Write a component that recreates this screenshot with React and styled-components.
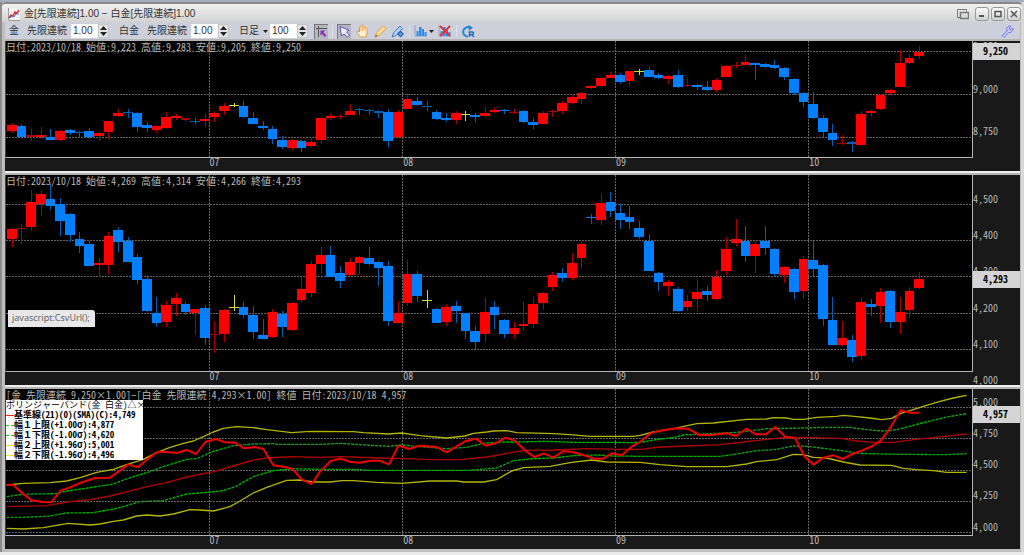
import React, { useState } from "react";
import styled, { createGlobalStyle } from "styled-components";

const GOTHIC = `"Noto Sans Mono CJK JP", "Noto Sans CJK JP", monospace`;
const UI = `"Liberation Sans", "Noto Sans CJK JP", sans-serif`;

const COLORS = { R: "#ff0000", B: "#0080ff", Y: "#d8d840" };
const WICKS = { R: "#a80000", B: "#0060b8", Y: "#d8d840" };

// x of the first candle and the step between candles, three units a pixel
const FIRST_X = 36;
const STEP = 28.96;
const MONTHS = [
  { label: "07", x: 628 },
  { label: "08", x: 1208 },
  { label: "09", x: 1845 },
  { label: "10", x: 2424 }
];

// colour, high, body top, body bottom, low
const GOLD = `
R 190 196 213 220|B 193 199 231 236|R 206 226 230 243|R 202 225 231 234|B 208 230 241 241
R 210 213 241 242|B 206 210 219 226|B 212 215 219 234|B 204 213 230 237|R 215 218 227 243
R 182 183 217 238|R 147 158 169 172|B 148 157 160 174|B 156 158 200 217|B 187 195 205 215
R 195 198 210 219|R 156 172 205 207|R 163 168 174 180|R 174 175 179 183|B 173 183 186 191
R 163 178 184 200|R 152 160 172 186|R 130 137 154 164|Y 129 134 137 141|B 122 138 172 174
B 156 175 192 192|B 182 197 205 211|B 197 206 237 251|B 229 239 261 268|R 236 239 263 270
B 240 242 265 275|R 234 247 259 262|R 172 175 241 248|R 163 168 175 179|R 162 167 170 178
R 132 153 165 166|B 144 147 150 165|B 147 150 153 165|B 150 154 158 174|B 148 156 243 261
R 150 156 232 234|R 99 117 147 148|B 112 122 134 138|B 123 137 140 153|B 149 156 177 180
B 160 174 179 187|R 152 160 179 191|Y 154 161 164 182|B 160 164 171 185|R 141 158 167 171
R 141 150 156 160|B 146 149 154 163|R 146 155 158 161|B 150 152 186 188|B 175 187 194 206
R 153 158 192 193|R 150 154 157 171|R 124 129 153 162|R 105 112 129 131|R 96 98 117 132
R 74 77 84 88|R 52 55 79 80|R 36 46 53 53|B 39 45 67 71|R 32 34 64 76
Y 26 33 36 45|B 21 31 50 52|B 39 46 55 57|R 45 48 58 71|B 31 46 80 83
R 55 74 78 81|B 73 76 81 90|B 64 81 90 92|R 55 60 90 97|R 15 19 50 51
R 6 14 17 24|R -17 6 16 18|B 9 10 15 60|B 8 11 21 23|B 0 14 24 26
B 20 24 52 59|B 55 58 98 105|B 96 98 126 140|B 96 132 174 178|B 166 173 215 231
B 192 220 241 258|R 225 248 251 254|B 243 247 251 275|R 153 163 254 258|R 151 153 160 170
R 103 105 148 149|R 87 89 99 105|R -31 8 80 81|R -17 -7 9 12|R -43 -25 -12 -4`;

const PLATINUM = `
R 168 170 202 224|R 157 168 171 216|R 53 90 166 176|R 57 66 95 131|B 36 81 101 114
B 78 96 148 191|B 122 125 190 209|B 180 201 221 243|B 207 217 281 282|R 257 274 279 315
R 181 193 279 307|B 165 174 209 240|B 194 207 269 270|B 246 255 324 337|B 314 322 417 420
B 376 423 453 464|R 386 400 449 464|R 363 377 396 432|B 391 395 420 430|R 410 412 423 488
B 399 408 497 519|R 447 487 490 543|R 412 414 487 509|Y 368 406 409 416|B 390 404 430 438
B 401 430 479 502|B 440 490 500 501|R 411 419 495 497|B 418 425 464 495|R 390 393 475 478
R 316 351 383 389|R 266 277 362 375|R 225 249 276 306|B 222 249 314 315|B 281 303 327 347
R 258 270 310 313|R 252 256 274 310|B 225 258 277 279|B 266 270 289 342|B 267 282 446 461
R 387 423 452 453|R 263 306 394 401|B 297 306 372 389|Y 353 384 387 408|B 408 411 452 453
R 397 406 449 463|B 387 402 418 454|B 423 424 476 501|B 462 478 509 530|R 378 421 487 509
B 387 406 428 470|B 440 445 487 499|R 449 468 486 501|R 388 455 461 478|R 376 397 456 468
R 361 363 392 415|R 301 309 346 357|B 289 304 317 329|R 243 273 317 323|R 207 217 257 291
B 126 134 139 155|R 66 94 144 159|B 59 90 116 136|B 97 124 145 171|B 102 134 150 171
B 147 167 196 200|B 186 206 296 297|B 300 303 331 358|R 325 330 341 373|B 345 352 417 420
R 370 388 406 417|R 321 359 380 416|B 342 356 370 387|R 293 316 380 383|R 195 232 297 308
R 141 202 214 221|B 161 206 252 270|R 207 217 252 302|B 162 206 228 250|B 229 230 305 315
R 283 285 308 332|B 289 290 360 382|R 251 261 358 380|B 206 263 290 311|B 275 280 441 461
B 376 445 518 519|R 447 498 518 521|B 488 503 554 570|R 378 390 552 565|B 380 395 406 432
R 349 361 401 452|B 355 356 451 468|R 376 419 451 485|R 346 356 415 439|R 299 322 348 350`;

const parse = text =>
  text
    .trim()
    .split(/[\n|]/)
    .map(row => {
      const [kind, ...n] = row.split(" ");
      const [high, top, bottom, low] = n.map(Number);
      return { kind, high, top, bottom, low };
    });

const BANDS = [
  {
    color: "#b00000",
    points:
      "20,380 140,377 200,366 270,359 330,348 440,320 500,308 560,291 640,275 700,258 760,240 800,234 870,230 960,232 1020,230 1130,234 1220,236 1300,239 1380,239 1460,231 1520,220 1570,211 1660,210 1760,206 1860,208 1920,208 1980,201 2060,198 2160,194 2230,186 2300,178 2350,173 2420,172 2520,175 2570,183 2620,187 2680,187 2740,179 2800,173 2860,166 2900,162"
  },
  {
    color: "#00b000",
    dashed: true,
    points:
      "20,350 60,344 100,342 170,341 200,333 250,326 340,312 370,300 410,287 440,278 490,260 560,238 590,236 640,214 700,197 760,192 820,191 830,193 960,193 1020,190 1080,194 1165,199 1205,195 1260,200 1340,206 1400,202 1450,190 1510,186 1550,186 1640,184 1720,187 1810,187 1890,188 1920,187 1980,177 2020,173 2050,165 2110,162 2210,157 2280,149 2300,146 2370,145 2480,142 2550,142 2570,145 2620,151 2650,153 2690,149 2720,141 2770,128 2840,111 2900,101"
  },
  {
    color: "#00b000",
    dashed: true,
    points:
      "20,412 70,412 150,408 200,399 280,398 350,385 420,365 490,362 560,342 620,337 670,332 710,318 760,290 820,272 880,266 960,268 1050,268 1120,271 1410,271 1490,264 1540,242 1600,236 1660,234 1720,227 1790,225 1840,228 1920,229 2160,229 2220,220 2270,212 2330,208 2380,198 2420,199 2480,206 2540,214 2570,219 2600,221 2700,223 2840,224 2900,221"
  },
  {
    color: "#b4b400",
    points:
      "20,315 70,310 150,308 200,303 240,293 290,277 340,268 380,254 430,238 470,218 510,202 550,190 580,183 610,170 640,156 670,145 710,140 760,143 800,149 875,158 930,154 1060,155 1090,158 1165,162 1205,159 1260,167 1340,174 1395,168 1420,160 1460,156 1480,153 1520,152 1550,158 1660,161 1710,164 1770,169 1900,169 1920,166 1960,156 2020,146 2090,131 2140,129 2240,118 2300,117 2320,113 2360,114 2380,118 2410,118 2450,112 2510,109 2530,106 2570,110 2610,114 2645,119 2675,115 2700,101 2730,92 2770,79 2820,64 2860,54 2900,46"
  },
  {
    color: "#b4b400",
    points:
      "20,445 70,447 130,443 205,430 270,435 300,432 340,424 370,420 410,408 440,405 480,408 520,402 570,389 600,390 640,393 690,380 720,363 760,339 800,322 860,301 900,300 940,306 990,306 1025,302 1060,302 1130,307 1205,310 1290,303 1370,303 1390,306 1450,306 1490,299 1535,273 1570,263 1650,259 1710,248 1775,240 1820,246 1920,247 1980,254 2060,260 2180,260 2240,252 2270,245 2330,239 2380,223 2410,224 2440,232 2480,234 2530,246 2580,255 2675,256 2710,265 2750,269 2800,272 2840,277 2900,277"
  },
  {
    color: "#ee0000",
    thick: true,
    points:
      "20,314 40,315 65,338 95,361 127,366 153,367 182,332 210,322 240,309 285,294 330,293 385,253 413,262 450,232 470,217 490,215 530,219 560,210 588,222 616,186 648,177 675,187 705,188 732,205 765,201 790,207 820,256 850,260 878,267 905,298 935,312 960,275 992,243 1022,236 1052,246 1080,248 1110,242 1138,242 1167,253 1195,197 1228,207 1258,197 1310,201 1340,217 1395,184 1428,176 1457,197 1487,190 1516,173 1545,182 1575,211 1603,231 1631,220 1660,233 1690,213 1720,217 1760,228 1780,236 1810,236 1835,220 1865,226 1895,200 1920,186 1950,161 1980,152 2030,145 2063,146 2098,165 2128,165 2180,160 2208,168 2240,146 2267,163 2297,163 2326,141 2355,170 2385,174 2414,230 2441,254 2470,233 2500,226 2528,237 2557,222 2585,212 2615,199 2643,181 2670,145 2702,91 2730,98 2758,98"
  }
];

const LEGEND = [
  { name: "基準線(21)(0)(SMA)(C):4,749", color: "#ff2020" },
  { name: "幅１上限(+1.00σ):4,877", color: "#20c020", dashed: true },
  { name: "幅１下限(-1.00σ):4,620", color: "#20c020", dashed: true },
  { name: "幅２上限(+1.96σ):5,001", color: "#e8e820" },
  { name: "幅２下限(-1.96σ):4,496", color: "#e8e820" }
];

const Candles = ({ rows }) =>
  rows.map((c, i) => {
    const x = FIRST_X + i * STEP;
    return (
      <g key={i} shapeRendering="crispEdges">
        <rect x={x - 1} y={c.high} width="3" height={c.low - c.high} fill={WICKS[c.kind]} />
        <rect
          x={x - 15}
          y={c.top}
          width="29"
          height={c.bottom - c.top}
          fill={c.bottom - c.top < 5 ? WICKS[c.kind] : COLORS[c.kind]}
        />
      </g>
    );
  });

const Bands = () =>
  BANDS.map((b, i) => (
    <polyline
      key={i}
      points={b.points}
      fill="none"
      stroke={b.color}
      strokeWidth={b.thick ? 6 : 4}
      strokeDasharray={b.dashed ? "9 3" : undefined}
      strokeLinejoin="round"
    />
  ));

// top and height are the visible range, full adds the strip under the plot
const ChartPanel = ({ grow, top, height, full, lines, header, badge, children, extra }) => (
  <Panel $grow={grow}>
    <Plot>
      <Drawing viewBox={`18 ${top} 2898 ${height}`} preserveAspectRatio="none" aria-hidden="true">
        <g stroke="#666666" strokeWidth="3" strokeDasharray="6 3" shapeRendering="crispEdges">
          {lines.map(l => (
            <line key={l.y} x1="18" x2="2916" y1={l.y} y2={l.y} />
          ))}
          {MONTHS.map(m => (
            <line key={m.x} x1={m.x} x2={m.x} y1={top} y2={top + height} />
          ))}
        </g>
        {children}
      </Drawing>
      <Header>{header}</Header>
      {extra}
    </Plot>
    <Months>
      {MONTHS.map(m => (
        <Month key={m.x} style={{ left: `${((m.x - 16) / 2898) * 100}%` }}>
          {m.label}
        </Month>
      ))}
    </Months>
    <Scale>
      {lines.map(l => (
        <Price key={l.y} style={{ top: `${((l.y - 17 - top) / full) * 100}%` }}>
          {l.label}
        </Price>
      ))}
      <Badge style={{ top: `${((badge.y - top) / full) * 100}%` }}>{badge.text}</Badge>
    </Scale>
  </Panel>
);

const Spinner = ({ label, initial, step, digits }) => {
  const [value, setValue] = useState(initial);
  const move = d => setValue((Number(value) + d * step).toFixed(digits));
  return (
    <SpinBox>
      <SpinInput aria-label={label} value={value} onChange={e => setValue(e.target.value)} />
      <Arrows>
        <Arrow type="button" aria-label={label + " +"} onClick={() => move(1)}>
          <svg width="7" height="4" viewBox="0 0 7 4">
            <path d="M0 4 3.500 0 7 4z" fill="#222" />
          </svg>
        </Arrow>
        <Arrow type="button" aria-label={label + " -"} onClick={() => move(-1)}>
          <svg width="7" height="4" viewBox="0 0 7 4">
            <path d="M0 0 3.500 4 7 0z" fill="#222" />
          </svg>
        </Arrow>
      </Arrows>
    </SpinBox>
  );
};

const Caret = () => (
  <svg width="5" height="3" viewBox="0 0 5 3" aria-hidden="true">
    <path d="M0 0h5L2.500 3z" fill="#222" />
  </svg>
);

const BarsIcon = ({ crossed }) => (
  <svg width="14" height="14" viewBox="0 0 14 14">
    <path d="M1 1v11h12" fill="none" stroke="#8aa4c4" />
    <path d="M2.500 7h2v5h-2zM5 3h2.500v9H5zM8 5h2v7H8zM10.500 8h2v4h-2z" fill="#2f8be6" />
    {crossed && <path d="M2 2l10 10M12 2 2 12" stroke="#e0343c" strokeWidth="2" />}
  </svg>
);

function App() {
  return (
    <Window>
      <GlobalStyle />
      <TitleBar>
        <svg width="12" height="13" viewBox="0 0 12 13" aria-hidden="true">
          <path d="M0 0h12v13H0z" fill="#f4f4f4" />
          <path d="M.5 0v12.500H12" fill="none" stroke="#999" />
          <path d="M1 10l2-3 2 1 2-4 2 1 2-3" fill="none" stroke="#e03030" strokeWidth="1.500" />
          <path d="M2 10l2-2 2 1 2-3 3 0" fill="none" stroke="#4a7ae0" />
        </svg>
        <Title>金[先限連続]1.00 − 白金[先限連続]1.00</Title>
        <Detach type="button" aria-label="detach">
          <svg width="12" height="11" viewBox="0 0 12 11" fill="none" stroke="#777">
            <path d="M3.500 8.500h-3v-8h9v2" />
            <path d="M3.500 3.500h8v6h-8z" strokeWidth="1.500" />
          </svg>
        </Detach>
        <WindowButtons>
          <WindowButton type="button" aria-label="minimize">
            <svg width="8" height="8" viewBox="0 0 8 8">
              <path d="M1 6h5" stroke="#555" strokeWidth="2" />
            </svg>
          </WindowButton>
          <WindowButton type="button" aria-label="maximize">
            <svg width="8" height="8" viewBox="0 0 8 8">
              <path d="M1 1.500h6v5H1z" fill="none" stroke="#555" strokeWidth="1.500" />
            </svg>
          </WindowButton>
          <WindowButton type="button" aria-label="close">
            <svg width="8" height="8" viewBox="0 0 8 8">
              <path d="M1 1l6 6M7 1 1 7" stroke="#555" strokeWidth="1.500" />
            </svg>
          </WindowButton>
        </WindowButtons>
      </TitleBar>

      <Toolbar>
        <Group $width={110}>
          <Name>金</Name>
          <Name>先限連続</Name>
          <Spinner label="金" initial="1.00" step={0.01} digits={2} />
        </Group>
        <Group $width={120}>
          <Name>白金</Name>
          <Name>先限連続</Name>
          <Spinner label="白金" initial="1.00" step={0.01} digits={2} />
        </Group>
        <Period>
          <PeriodSelect aria-label="足種" defaultValue="日足">
            <option>日足</option>
            <option>週足</option>
            <option>月足</option>
          </PeriodSelect>
          <Caret />
        </Period>
        <Spinner label="本数" initial="100" step={1} digits={0} />
        <Tools>
          <Tool type="button" $pressed aria-label="crosshair">
            <svg width="13" height="13" viewBox="0 0 13 13">
              <path d="M3.500 1v11M1 3.500h11" stroke="#555" />
              <path d="M5.500 5.500v5l1.500-1.500 3 3 1.500-1.500-3-3 1.500-2z" fill="#8a2fb8" />
            </svg>
          </Tool>
          <Divider />
          <Tool type="button" $pressed aria-label="select">
            <svg width="13" height="13" viewBox="0 0 13 13">
              <path d="M2 1.500 3.500 11l2.500-2 3.500 3L11.500 10 8.500 7l2.500-2z" fill="#f0f0ff" stroke="#5a50b8" />
            </svg>
          </Tool>
          <Tool type="button" aria-label="pan">
            <svg width="13" height="14" viewBox="0 0 13 14">
              <path
                d="M4 13 1 8.500Q.5 7 2 7l1.500 1V3q1-1.500 1.500 0V1.500q1-1.500 1.600 0V2q1-1 1.500.5V3.500q1-1 1.600.5v1q1.500-1 1.500.5L11 10l-1.500 3z"
                fill="#fff0d8"
                stroke="#e8963a"
              />
              <path d="M5 3v4M6.600 2v5M8.200 3v4" stroke="#e8963a" strokeWidth=".7" />
            </svg>
          </Tool>
          <Tool type="button" aria-label="draw">
            <svg width="13" height="13" viewBox="0 0 13 13">
              <path d="M1 12l1.500-4L9.500 1l2.500 2.500L5 10.500z" fill="#ffe0a0" stroke="#e8963a" />
              <path d="M1 12l1-2.500 1.500 1.500z" fill="#8a5a20" />
            </svg>
          </Tool>
          <Tool type="button" aria-label="edit lines">
            <svg width="14" height="13" viewBox="0 0 14 13">
              <path d="M1 12l1.500-4L9 1l2.500 2.500L5 10.500z" fill="#b4d4fa" stroke="#3f78c8" />
              <path d="M9.500 5.500 13 9l-3.500 3.500L6 9z" fill="#2a66b8" />
              <path d="M9.500 7.500v3M8 9h3" stroke="#6ea4e4" />
            </svg>
          </Tool>
          <Divider />
          <MenuTool type="button" aria-label="indicators">
            <BarsIcon />
            <Caret />
          </MenuTool>
          <Tool type="button" aria-label="remove indicators">
            <BarsIcon crossed />
          </Tool>
          <Divider />
          <Tool type="button" aria-label="reload">
            <svg width="13" height="13" viewBox="0 0 13 13">
              <path d="M6 11.500A4.700 4.700 0 1 1 8 2.600" fill="none" stroke="#2488d8" strokeWidth="2" />
              <path d="M6 0l5 2.500L7 6z" fill="#2488d8" />
              <path d="M7.500 12V7h2.500q1.500 0 1.500 1.300T10 9.700H7.500M9.800 9.700 12 12" fill="none" stroke="#1c6cc0" strokeWidth="1.500" />
            </svg>
          </Tool>
        </Tools>
        <Settings type="button" aria-label="settings">
          <svg width="13" height="13" viewBox="0 0 13 13">
            <path
              d="M1 10.500 6 6Q5 3.500 6.500 2T10 1L8.500 3v1.500H10L12 3q.5 2-1 3.500T7.500 7.500l-4.500 5z"
              fill="#c8c8ff"
              stroke="#7a74ee"
            />
          </svg>
        </Settings>
      </Toolbar>

      <Charts>
        <ChartPanel
          grow={130}
          top={-57}
          height={348}
          full={390}
          lines={[
            { y: -26, label: "9,250" },
            { y: 104, label: "9,000" },
            { y: 231, label: "8,750" }
          ]}
          header="日付:2023/10/18 始値:9,223 高値:9,283 安値:9,205 終値:9,250"
          badge={{ y: -50, text: "9,250" }}
        >
          <Candles rows={parse(GOLD)} />
        </ChartPanel>
        <ChartPanel
          grow={210}
          top={9}
          height={588}
          full={630}
          lines={[
            { y: 97, label: "4,500" },
            { y: 206, label: "4,400" },
            { y: 314, label: "4,300" },
            { y: 424, label: "4,200" },
            { y: 532, label: "4,100" },
            { y: 641, label: "4,000" }
          ]}
          header="日付:2023/10/18 始値:4,269 高値:4,314 安値:4,266 終値:4,293"
          badge={{ y: 297, text: "4,293" }}
          extra={<StatusTip>javascript:CsvUrl();</StatusTip>}
        >
          <Candles rows={parse(PLATINUM)} />
        </ChartPanel>
        <ChartPanel
          grow={160}
          top={27}
          height={438}
          full={480}
          lines={[
            { y: 83, label: "5,000" },
            { y: 176, label: "4,750" },
            { y: 270, label: "4,500" },
            { y: 363, label: "4,250" },
            { y: 457, label: "4,000" }
          ]}
          header="[金 先限連続 9,250×1.00]−[白金 先限連続 4,293×1.00] 終値 日付:2023/10/18 4,957"
          badge={{ y: 77, text: "4,957" }}
          extra={
            <Legend>
              <LegendTitle>
                ボリンジャーバンド(金 白金)
                <LegendButton type="button">△</LegendButton>
                <LegendButton type="button">×</LegendButton>
              </LegendTitle>
              {LEGEND.map(item => (
                <LegendRow key={item.name}>
                  <Swatch $color={item.color} $dashed={item.dashed} />
                  {item.name}
                </LegendRow>
              ))}
            </Legend>
          }
        >
          <Bands />
        </ChartPanel>
      </Charts>
    </Window>
  );
}

const GlobalStyle = createGlobalStyle`
  * {
    box-sizing: border-box;
  }
  body {
    margin: 0;
    background: #e8e8e8;
  }
  button, input, select {
    margin: 0;
    padding: 0;
    border: none;
    background: none;
    font: inherit;
    color: inherit;
  }
`;

const Window = styled.div`
  display: flex;
  flex-direction: column;
  height: 100vh;
  min-height: 400px;
  padding: 0 4px 3px 5px;
  background: linear-gradient(to right, #8c8c8c 0, #8c8c8c 2px, #bdbdbd 2px, #bdbdbd calc(100% - 3px), #d8d8d8 calc(100% - 3px));
  border-top: 2px solid #a6acb8;
  border-bottom: 3px solid #ececec;
  font-family: ${UI};
  font-size: 10px;
  line-height: 12px;
  color: #333333;
`;

const TitleBar = styled.div`
  flex: none;
  display: flex;
  align-items: center;
  height: 20px;
  margin: 0 -2px 0 -3px;
  padding: 2px 1px 0 6px;
  border-top: 2px solid #888888;
  border-radius: 4px 4px 0 0;
  background: linear-gradient(#f2f2f2, #d2d2d2);
`;

const Title = styled.div`
  flex: 1;
  padding-left: 4px;
  white-space: nowrap;
`;

const Detach = styled.button`
  display: flex;
  margin-right: 6px;
`;

const WindowButtons = styled.div`
  display: flex;
  gap: 2px;
`;

const WindowButton = styled.button`
  display: flex;
  align-items: center;
  justify-content: center;
  width: 14px;
  height: 14px;
  border: 1px solid #999999;
  border-radius: 3px;
  background: linear-gradient(#fafafa, #d0d0d0);
`;

const Toolbar = styled.div`
  flex: none;
  display: flex;
  align-items: center;
  height: 19px;
  padding: 0 6px 0 4px;
  background: #cdd0da;
  border-bottom: 1px solid #a8b4c8;
`;

const Group = styled.div`
  flex: none;
  display: flex;
  align-items: center;
  width: ${p => p.$width}px;
`;

const Name = styled.span`
  margin-right: 8px;
  white-space: nowrap;

  & + & {
    margin-right: 4px;
  }
`;

const SpinBox = styled.div`
  display: flex;
  width: 38px;
  height: 14px;
  background: #ffffff;
`;

const SpinInput = styled.input`
  flex: 1;
  min-width: 0;
  padding-left: 2px;
`;

const Arrows = styled.div`
  display: flex;
  flex-direction: column;
  width: 11px;
  background: #e4e4e4;
  border: 1px solid #c4c4c4;
`;

const Arrow = styled.button`
  flex: 1;
  display: flex;
  align-items: center;
  justify-content: center;
`;

const Period = styled.label`
  display: flex;
  align-items: center;
  gap: 4px;
  padding-right: 2px;
`;

const PeriodSelect = styled.select`
  appearance: none;
  width: 20px;
`;

const Tools = styled.div`
  display: flex;
  align-items: center;
  gap: 4px;
  margin-left: 6px;
`;

const Tool = styled.button`
  display: flex;
  align-items: center;
  justify-content: center;
  width: 14px;
  height: 15px;
  background: ${p => (p.$pressed ? "#b4b6c0" : "none")};
  box-shadow: ${p => (p.$pressed ? "inset 1px 1px 0 #777777" : "none")};
`;

const MenuTool = styled.button`
  display: flex;
  align-items: center;
  gap: 1px;
`;

const Divider = styled.span`
  width: 1px;
  height: 12px;
  background: #dfe1e8;
`;

const Settings = styled.button`
  display: flex;
  margin-left: auto;
`;

const Charts = styled.div`
  flex: 1;
  display: flex;
  flex-direction: column;
  gap: 4px;
  min-height: 0;
  background: #eeeeee;
`;

const Panel = styled.section`
  flex: ${p => p.$grow} 1 0;
  display: grid;
  grid-template-columns: minmax(0, 1fr) 47px;
  grid-template-rows: minmax(0, 1fr) 13px;
  min-height: 0;
  background: #191919;
  font-family: ${GOTHIC};
  color: #b8b8b8;
  box-shadow: 0 -2px 0 #b4b4b4;
`;

const Plot = styled.div`
  position: relative;
  min-height: 0;
  background: #000000;
  border: 1px solid #b4b4b4;
  border-top: none;
  border-left-color: #444444;
`;

const Drawing = styled.svg`
  display: block;
  width: 100%;
  height: 100%;
`;

const Header = styled.div`
  position: absolute;
  top: 0;
  left: 0;
  white-space: pre;
`;

const Months = styled.div`
  grid-column: 1;
  grid-row: 2;
  position: relative;
`;

const Month = styled.span`
  position: absolute;
  top: -2px;
`;

const Scale = styled.div`
  grid-column: 2;
  grid-row: 1 / 3;
  position: relative;
  overflow: hidden;
`;

const Price = styled.span`
  position: absolute;
  left: 0;
  transform: translateY(-50%);
`;

const Badge = styled.strong`
  position: absolute;
  left: 0;
  right: 0;
  height: 17px;
  padding-right: 2px;
  background: #d4d4d4;
  color: #000000;
  line-height: 15px;
  text-align: center;
`;

const StatusTip = styled.div`
  position: absolute;
  left: 2px;
  top: 135px;
  padding: 2px 5px 3px 4px;
  background: #e8e8e8;
  border-radius: 0 3px 0 0;
  color: #666666;
  font-family: "Noto Sans", sans-serif;
  font-size: 9px;
`;

const Legend = styled.div`
  position: absolute;
  left: 0;
  top: 11px;
  width: 137px;
  background: #ffffff;
  color: #000000;
  font-size: 9px;
  line-height: 10px;
  white-space: pre;
`;

const LegendTitle = styled.div`
  display: flex;
`;

const LegendButton = styled.button`
  width: 9px;
`;

const LegendRow = styled.div`
  display: flex;
  align-items: center;
  font-weight: bold;
`;

const Swatch = styled.span`
  flex: none;
  width: 8px;
  border-top: 1px ${p => (p.$dashed ? "dashed" : "solid")} ${p => p.$color};
`;

export default App;
